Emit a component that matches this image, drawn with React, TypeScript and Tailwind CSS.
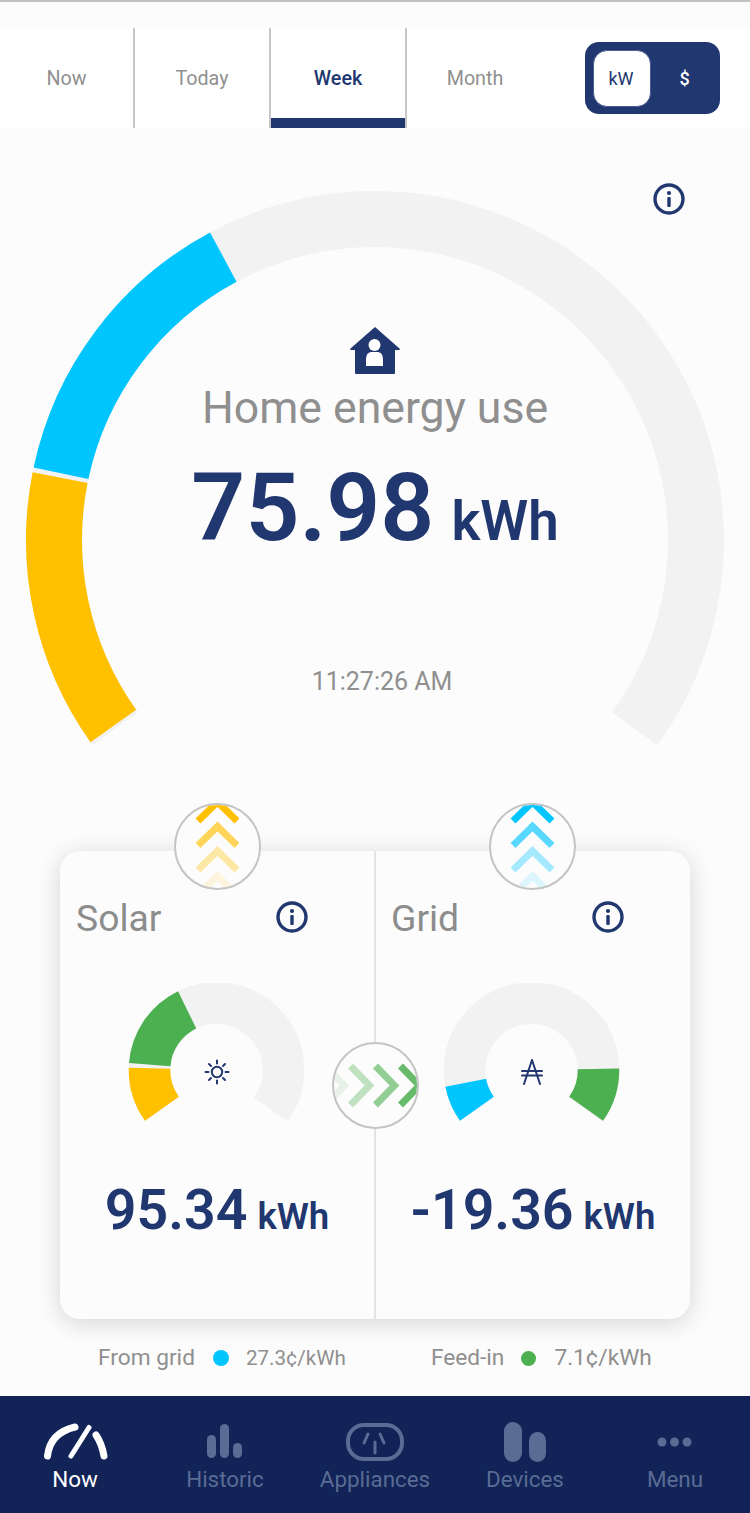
const NAVY = "#21376f";

// point on a circle; angles are screen degrees, clockwise from 3 o'clock
function polar(cx: number, cy: number, r: number, deg: number) {
  const a = (deg * Math.PI) / 180;
  return [cx + r * Math.cos(a), cy + r * Math.sin(a)];
}

function arc(cx: number, cy: number, r: number, from: number, to: number) {
  const [x1, y1] = polar(cx, cy, r, from);
  const [x2, y2] = polar(cx, cy, r, to);
  const large = to - from > 180 ? 1 : 0;
  return `M ${x1} ${y1} A ${r} ${r} 0 ${large} 1 ${x2} ${y2}`;
}

interface Segment {
  color: string;
  from: number;
  to: number;
}

function Gauge({
  width,
  height,
  cx,
  cy,
  r,
  stroke,
  segments,
}: {
  width: number;
  height: number;
  cx: number;
  cy: number;
  r: number;
  stroke: number;
  segments: Segment[];
}) {
  return (
    <svg width={width} height={height} className="block" fill="none">
      <path d={arc(cx, cy, r, 144, 396)} stroke="#f2f2f2" strokeWidth={stroke} />
      {segments.map((s) => (
        <path key={s.color + s.from} d={arc(cx, cy, r, s.from, s.to)} stroke={s.color} strokeWidth={stroke} />
      ))}
    </svg>
  );
}

function InfoIcon({ size = 32 }: { size?: number }) {
  return (
    <svg width={size} height={size} viewBox="0 0 32 32" fill="none" className="block">
      <circle cx="16" cy="16" r="14" stroke={NAVY} strokeWidth="3.4" />
      <circle cx="16" cy="10" r="2.1" fill={NAVY} />
      <rect x="14.3" y="14" width="3.4" height="10" rx="1" fill={NAVY} />
    </svg>
  );
}

function HomeIcon() {
  return (
    <svg width="52" height="50" viewBox="0 0 52 50" className="block">
      <path
        d="M26 1 L50.5 22.5 Q51.5 24 49.5 24 L46 24 L46 47 Q46 48 45 48 L7 48 Q6 48 6 47 L6 24 L2.5 24 Q0.5 24 1.5 22.5 Z"
        fill={NAVY}
      />
      <circle cx="25.5" cy="19" r="6" fill="#fff" />
      <path d="M17 40 L17 33 Q17 27 22 26 L29 26 Q34 27 34 33 L34 40 Z" fill="#fff" />
    </svg>
  );
}

function SunIcon() {
  return (
    <svg width="26" height="26" viewBox="0 0 26 26" fill="none" stroke={NAVY} strokeWidth="2" strokeLinecap="round" className="block">
      <circle cx="13" cy="13" r="5.2" />
      <path d="M13 1.5V4.5M13 21.5V24.5M1.5 13H4.5M21.5 13H24.5M5 5L7 7M19 19L21 21M21 5L19 7M7 19L5 21" />
    </svg>
  );
}

function AustralIcon() {
  return (
    <svg width="22" height="26" viewBox="0 0 22 26" fill="none" stroke={NAVY} strokeWidth="2" strokeLinecap="round" className="block">
      <path d="M11 1 L3 25 M11 1 L19 25 M1 12H21M1 16.5H21" />
    </svg>
  );
}

// four fading chevrons inside a ringed circle
function FlowBadge({ color, direction, className }: { color: string; direction: "up" | "right"; className: string }) {
  const offsets = direction === "up" ? [-1, 23.5, 48, 73] : [87.5, 62.5, 37.5, 12.5];
  const opacities = direction === "up" ? [1, 0.65, 0.35, 0.12] : [0.85, 0.6, 0.35, 0.12];
  return (
    <div className={`absolute w-[87px] h-[87px] rounded-full border-2 border-[#c4c4c4] overflow-hidden bg-[#fcfcfc] ${className}`}>
      <svg width="87" height="87" viewBox="0 0 87 87" fill="none" className="absolute -left-[2px] -top-[2px]">
        {offsets.map((o, i) => (
          <path
            key={o}
            d={direction === "up" ? `M24 ${o + 19} L43.5 ${o} L63 ${o + 19}` : `M${o - 19} 24 L${o} 43.5 L${o - 19} 63`}
            stroke={color}
            strokeOpacity={opacities[i]}
            strokeWidth="7"
          />
        ))}
      </svg>
    </div>
  );
}

function NowIcon() {
  return (
    <svg width="66" height="40" viewBox="0 0 66 40" fill="none" stroke="#fff" strokeLinecap="round" className="block">
      <path d="M5.5 34 Q8 11 33 5" strokeWidth="7" />
      <path d="M29 34 L47 5.5" strokeWidth="5" />
      <path d="M54 13 Q60 22 62 34" strokeWidth="7" />
    </svg>
  );
}

function HistoricIcon() {
  return (
    <svg width="36" height="36" viewBox="0 0 36 36" fill="#5a6b94" className="block">
      <rect x="0" y="11" width="9" height="23" rx="4.5" />
      <rect x="13" y="0" width="9" height="34" rx="4.5" />
      <rect x="26" y="19" width="9" height="15" rx="4.5" />
    </svg>
  );
}

function AppliancesIcon() {
  return (
    <svg width="58" height="38" viewBox="0 0 58 38" fill="none" stroke="#5a6b94" strokeLinecap="round" className="block">
      <rect x="2" y="2" width="54" height="34" rx="16" strokeWidth="4" />
      <path d="M29 19V30M22 11L18 20M34 11L38 20" strokeWidth="3" />
    </svg>
  );
}

function DevicesIcon() {
  return (
    <svg width="42" height="40" viewBox="0 0 42 40" fill="#5a6b94" className="block">
      <rect x="0" y="0" width="18" height="40" rx="9" />
      <rect x="25" y="10" width="17" height="30" rx="8.5" />
    </svg>
  );
}

function MenuIcon() {
  return (
    <svg width="36" height="10" viewBox="0 0 36 10" fill="#5a6b94" className="block">
      <circle cx="5" cy="5" r="4.5" />
      <circle cx="17.5" cy="5" r="4.5" />
      <circle cx="30" cy="5" r="4.5" />
    </svg>
  );
}

const tabs = ["Now", "Today", "Week", "Month"];

const navItems = [
  { label: "Now", icon: <NowIcon />, active: true },
  { label: "Historic", icon: <HistoricIcon />, active: false },
  { label: "Appliances", icon: <AppliancesIcon />, active: false },
  { label: "Devices", icon: <DevicesIcon />, active: false },
  { label: "Menu", icon: <MenuIcon />, active: false },
];

function EnergyColumn({
  title,
  value,
  segments,
  icon,
  cx,
  divider,
}: {
  title: string;
  value: string;
  segments: Segment[];
  icon: React.ReactNode;
  cx: number;
  divider?: boolean;
}) {
  return (
    <div className={`flex flex-col ${divider ? "border-r-2 border-[#e4e4e4]" : ""}`}>
      <div className={`flex items-center justify-between pr-[66px] pt-[46px] ${divider ? "pl-4" : "pl-[15px]"}`}>
        <span className="pt-[3px] text-[37.3px] leading-[36px] text-[#8c8c8c]">{title}</span>
        <InfoIcon />
      </div>
      <div className="relative self-center mt-[47px] w-[180px] h-[145px]">
        <Gauge width={180} height={145} cx={cx} cy={87} r={67} stroke={41.5} segments={segments} />
        <div className="absolute top-[76px] -translate-x-1/2" style={{ left: cx }}>
          {icon}
        </div>
      </div>
      <div className="mt-[50px] flex items-baseline justify-center font-semibold text-[#21376f]">
        <span className="text-[55.5px] leading-[66px]">{value}</span>
        <span className="ml-[10px] text-[36.6px] leading-[66px]">kWh</span>
      </div>
    </div>
  );
}

export default function App() {
  return (
    <div className="w-[750px] h-[1513px] flex flex-col bg-[#fcfcfc] font-['Roboto',sans-serif]">
      <div className="h-[2px] bg-[#c2c2c2]" />

      {/* period tabs and unit switch */}
      <div className="mt-[26px] h-[100px] bg-white flex">
        {tabs.map((t, i) => (
          <div
            key={t}
            className={`relative h-full pt-[2px] flex items-center justify-center text-[19.7px] ${i === 0 ? "w-[135px]" : "w-[136px]"} ${
              i < 3 ? "border-r-2 border-[#c6c6c6]" : ""
            } ${t === "Week" ? "font-medium text-[#21376f]" : "text-[#8f8f8f]"}`}
          >
            {t}
            {t === "Week" && <div className="absolute left-0 right-0 bottom-0 h-[10px] bg-[#21376f]" />}
          </div>
        ))}
        <div className="ml-[42px] mt-[14px] w-[135px] h-[72px] rounded-[14px] bg-[#21376f] p-2 flex">
          <div className="w-[58px] h-[57px] pr-[2px] rounded-[14px] bg-white border border-[#4a5d90] flex items-center justify-center text-[18px] text-[#21376f]">
            kW
          </div>
          <div className="flex-1 pl-[6px] flex items-center justify-center text-[18px] font-medium text-white">$</div>
        </div>
      </div>

      {/* home energy gauge */}
      <div className="relative h-[723px]">
        <Gauge
          width={750}
          height={640}
          cx={375}
          cy={412}
          r={321}
          stroke={56}
          segments={[
            { color: "#ffc000", from: 144.6, to: 191.2 },
            { color: "#00c5ff", from: 192, to: 241.8 },
          ]}
        />
        <div className="absolute left-[653px] top-[55px]">
          <InfoIcon />
        </div>
        <div className="absolute inset-x-0 top-[198px] flex flex-col items-center">
          <HomeIcon />
          <div className="mt-[5px] text-[44.6px] leading-[54px] text-[#8f8f8f]">Home energy use</div>
          <div className="mt-[17px] flex items-baseline font-semibold text-[#21376f]">
            <span className="text-[94.6px] leading-[112px]">75.98</span>
            <span className="ml-[17px] text-[54.6px] leading-[112px]">kWh</span>
          </div>
          <div className="mt-[90px] ml-[14px] text-[25px] leading-[30px] text-[#8f8f8f]">11:27:26 AM</div>
        </div>
        <FlowBadge color="#ffc000" direction="up" className="left-[174px] top-[675px] z-10" />
        <FlowBadge color="#00c5ff" direction="up" className="left-[489px] top-[675px] z-10" />
      </div>

      {/* solar and grid card */}
      <div className="relative mx-[60px] h-[468px] rounded-[20px] bg-[#fcfcfc] shadow-[0_4px_24px_rgba(0,0,0,0.16)] grid grid-cols-[316px_314px]">
        <EnergyColumn
          title="Solar"
          value="95.34"
          divider
          cx={89.5}
          icon={<SunIcon />}
          segments={[
            { color: "#ffc000", from: 144.6, to: 181.5 },
            { color: "#4caf50", from: 184.5, to: 244 },
          ]}
        />
        <EnergyColumn
          title="Grid"
          value="-19.36"
          cx={88.5}
          icon={<AustralIcon />}
          segments={[
            { color: "#00c5ff", from: 144.6, to: 169 },
            { color: "#4caf50", from: 359, to: 395.4 },
          ]}
        />
        <FlowBadge color="#4caf50" direction="right" className="left-[272px] top-[191px]" />
      </div>

      {/* tariff row */}
      <div className="mt-[25px] h-[28px] relative flex items-center text-[#8f8f8f]">
        <span className="ml-[98px] text-[22.7px]">From grid</span>
        <span className="ml-[18px] w-4 h-4 rounded-full bg-[#00c5ff]" />
        <span className="ml-[17px] text-[20.6px]">27.3¢/kWh</span>
        <span className="ml-[85px] text-[22.7px]">Feed-in</span>
        <span className="ml-[17px] w-[15px] h-[15px] rounded-full bg-[#4caf50]" />
        <span className="ml-[18px] text-[22.7px]">7.1¢/kWh</span>
      </div>

      {/* bottom navigation */}
      <nav className="mt-auto h-[117px] bg-[#112357] grid grid-cols-5">
        {navItems.map((n) => (
          <div key={n.label} className="relative flex flex-col items-center">
            <div className="h-[44px] mt-[24px] flex items-center">{n.icon}</div>
            <span className={`absolute top-[68px] text-[22.4px] leading-[30px] ${n.active ? "text-white" : "text-[#5a6b94]"}`}>
              {n.label}
            </span>
          </div>
        ))}
      </nav>
    </div>
  );
}
